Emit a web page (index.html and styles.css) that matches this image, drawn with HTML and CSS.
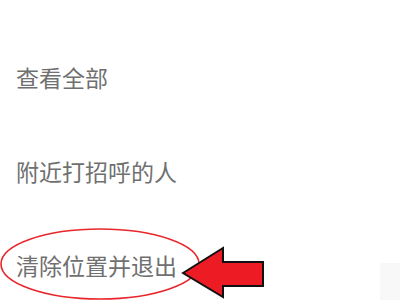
FILE: index.html
```html
<!DOCTYPE html>
<html lang="zh-CN">
<head>
	<meta charset="UTF-8">
	<title>附近的人</title>
	<link rel="stylesheet" href="styles.css">
</head>
<body>

<ul class="menu">
	<li class="menu-item">查看全部</li>
	<li class="menu-item">附近打招呼的人</li>
	<li class="menu-item menu-item--marked">
		清除位置并退出
		<!-- пометка поверх пункта -->
		<svg class="mark" width="400" height="94" viewBox="0 0 400 94">
			<ellipse cx="100" cy="46" rx="99" ry="35" fill="none" stroke="#e8262c" stroke-width="1.6"/>
			<polygon points="183,55 223,30 223,44 263,44 263,68 223,68 223,79"
				fill="#ed1c24" stroke="#111" stroke-width="2" stroke-linejoin="miter"/>
		</svg>
	</li>
</ul>
<div class="corner"></div>

</body>
</html>
```

FILE: styles.css
```css
html,
body {
    margin: 0;
    background: #ffffff;
    overflow: hidden;
}
body {
    width: 400px;
    height: 300px;
    position: relative;
}
.menu {
    list-style: none;
    margin: 0;
    padding: 30px 0 0 16px;
}
.menu-item {
    height: 94px;
    display: flex;
    align-items: center;
    font-family: "Noto Sans CJK SC", sans-serif;
    font-size: 23px;
    color: #707070;
    position: relative;
}
.mark {
    position: absolute;
    left: -16px;
    top: 0;
}
.corner {
    position: absolute;
    left: 380px;
    top: 263px;
    width: 20px;
    height: 37px;
    background: #f8f8f8;
}
```
